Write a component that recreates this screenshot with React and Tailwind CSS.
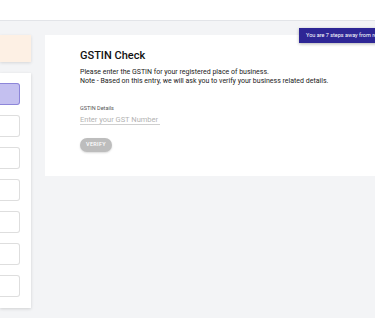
import React from 'react';

const steps = [true, false, false, false, false, false, false];

const App = () => {
  return (
    <div className="relative w-[375px] h-[318px] overflow-hidden bg-[#f3f4f6]" style={{ fontFamily: 'Roboto, "Liberation Sans", sans-serif' }}>
      <div className="h-[21px] bg-white border-b border-[#e2e4e8]" />

      <div className="flex gap-[14px]">
        <div className="w-[31px] shrink-0 flex flex-col gap-[11px] pt-[14px]">
          <div className="h-[27px] bg-[#fdf0e4] shadow-[0_1px_3px_rgba(0,0,0,0.12)]" />
          <div className="bg-white pt-[10px] pb-[11px] pr-[11px] flex flex-col gap-[10px] shadow-[0_1px_3px_rgba(0,0,0,0.15)]">
            {steps.map((active, i) => (
              <div
                key={i}
                className={active
                  ? 'h-[22px] rounded-r-[3px] bg-[#c4c0f0] border border-l-0 border-[#8d86d9]'
                  : 'h-[22px] rounded-r-[3px] bg-white border border-l-0 border-[#dedede]'}
              />
            ))}
          </div>
        </div>

        <div className="flex-1 pt-[14px]">
          <div className="h-[141px] bg-white pl-[35px] pt-[14px]">
            <h1 className="text-[11px] leading-[14px] font-medium text-[#111]">GSTIN Check</h1>
            <div className="mt-[5px] text-[7px] leading-[9px] text-[#222] whitespace-nowrap">
              <p>Please enter the GSTIN for your registered place of business.</p>
              <p>Note - Based on this entry, we will ask you to verify your business related details.</p>
            </div>
            <div className="mt-[19px] text-[5.5px] leading-[7px] text-[#555]">GSTIN Details</div>
            <div className="mt-[3px] w-[80px] border-b border-[#cfcfcf] text-[7.5px] leading-[9px] text-[#b3b3b3]">
              Enter your GST Number
            </div>
            <button
              type="button"
              className="mt-[12.5px] h-[14px] w-[32px] rounded-full bg-[#bdbdbd] text-white text-[5.5px] font-medium tracking-[0.3px] shadow-[0_1px_2px_rgba(0,0,0,0.15)]"
            >
              VERIFY
            </button>
          </div>
        </div>
      </div>

      <div className="absolute left-[299px] top-[28px] h-[15px] pl-[7px] pr-[10px] flex items-center bg-[#2e2695] text-white text-[5.5px] whitespace-nowrap shadow-[0_1px_3px_rgba(0,0,0,0.3)]">
        You are 7 steps away from registration
      </div>
    </div>
  );
};

export default App;
